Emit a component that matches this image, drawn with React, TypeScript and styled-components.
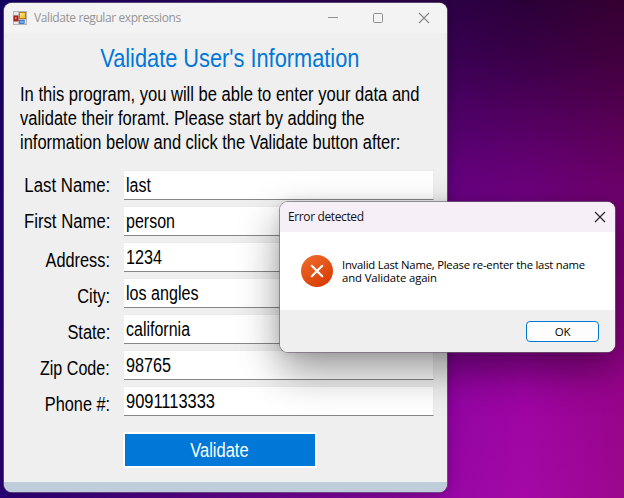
import React from "react";
import styled, { createGlobalStyle } from "styled-components";

const GlobalStyle = createGlobalStyle`
  *, *::before, *::after { box-sizing: border-box; }
  html, body { margin: 0; padding: 0; overflow: hidden; }
`;

const Desktop = styled.main`
  position: relative;
  width: 624px;
  height: 498px;
  overflow: hidden;
  font-family: "Liberation Sans", Arial, sans-serif;
  color: #000;
  background:
    linear-gradient(90deg, rgba(20, 0, 110, 0.85) 0%, rgba(40, 0, 120, 0.6) 30%, rgba(60, 0, 160, 0.13) 72%, rgba(60, 0, 160, 0) 84%, rgba(110, 0, 10, 0.16) 100%),
    linear-gradient(180deg, #2a0038 0%, #3a0048 12%, #560064 26%, #700080 40%, #8a0092 58%, #9e04a2 78%, #a408a6 100%);
`;

const MainWindow = styled.section`
  position: absolute;
  left: 4px;
  top: 3px;
  width: 443px;
  height: 489px;
  display: flex;
  flex-direction: column;
  border-radius: 8px;
  overflow: hidden;
  background: #efefef;
  box-shadow: 0 0 0 1px rgba(120, 110, 135, 0.6), 0 2px 14px rgba(0, 0, 0, 0.3);
`;

const TitleBar = styled.header`
  display: flex;
  align-items: center;
  flex: none;
  height: 30px;
  padding-left: 9px;
  background: #f3f3f3;
`;

const WindowTitle = styled.span<{ $color: string; $spacing: number }>`
  flex: 1;
  font: 12px/16px "Open Sans", "Noto Sans", sans-serif;
  letter-spacing: ${(p) => p.$spacing}px;
  color: ${(p) => p.$color};
  white-space: nowrap;
`;

const AppIcon = styled.svg`
  width: 14px;
  height: 14px;
  margin-right: 7px;
`;

const CaptionButtons = styled.div`
  display: flex;
`;

const CaptionButton = styled.button<{ $width?: number }>`
  display: grid;
  place-items: center;
  width: ${(p) => p.$width ?? 46}px;
  height: 30px;
  padding: 0;
  border: 0;
  background: none;
`;

const Narrow = styled.span<{ $scale?: number; $origin?: string }>`
  display: block;
  white-space: nowrap;
  transform: scaleX(${(p) => p.$scale ?? 0.825});
  transform-origin: ${(p) => p.$origin ?? "left"} center;
`;

const Content = styled.div`
  flex: 1;
  display: flex;
  flex-direction: column;
`;

const Heading = styled.h1`
  display: flex;
  justify-content: center;
  margin: 9px 0 0;
  padding-left: 9px;
  height: 32px;
  font-size: 26.7px;
  line-height: 32px;
  font-weight: 400;
  color: #0078d7;
`;

const Intro = styled.p`
  margin: 8px 0 0 16px;
  height: 72px;
  width: 410px;
  font-size: 20px;
  line-height: 24px;
`;

const Form = styled.form`
  display: grid;
  grid-template-columns: 106px 310px;
  column-gap: 14px;
  row-gap: 6px;
  margin-top: 16px;
`;

const Label = styled.label<{ $drop: number }>`
  display: flex;
  justify-content: flex-end;
  height: 30px;
  padding-top: ${(p) => p.$drop}px;
  font-size: 20px;
  line-height: 24px;
`;

const Field = styled.div`
  height: 30px;
  padding: 2px 0 0 2px;
  overflow: hidden;
  font-size: 20px;
  line-height: 24px;
  background: #fff;
  border: 1px solid #ebebeb;
  border-left: 0;
  border-bottom-color: #868686;
`;

const ValidateButton = styled.button`
  display: flex;
  justify-content: center;
  width: 194px;
  height: 36px;
  margin: 16px 0 0 119px;
  padding: 0 2px 0 0;
  border: 2px solid #fdfdfd;
  background: #0078d7;
  color: #fff;
  font: 20px/32px "Liberation Sans", Arial, sans-serif;
`;

const StatusStrip = styled.footer`
  height: 10px;
  background: #bfcddb;
`;

const Dialog = styled.section`
  position: absolute;
  left: 280px;
  top: 202px;
  width: 335px;
  height: 150px;
  display: flex;
  flex-direction: column;
  border-radius: 8px;
  overflow: hidden;
  background: #fff;
  box-shadow:
    0 0 0 1px rgba(110, 100, 115, 0.65),
    0 18px 42px rgba(0, 0, 0, 0.42),
    0 0 12px rgba(0, 0, 0, 0.1);
`;

const DialogTitle = styled.header`
  display: flex;
  align-items: center;
  height: 30px;
  flex: none;
  padding-left: 8px;
  background: #f7eff8;
`;

const DialogBody = styled.div`
  display: flex;
  height: 78px;
  padding: 23px 0 0 21px;
`;

const Message = styled.p`
  margin: 3px 0 0 9px;
  font: 11.3px/13px "Open Sans", "Noto Sans", sans-serif;
  white-space: nowrap;
`;

const MessageLine = styled.span<{ $spacing: number }>`
  display: block;
  letter-spacing: ${(p) => p.$spacing}px;
`;

const DialogFooter = styled.footer`
  flex: 1;
  display: flex;
  justify-content: flex-end;
  padding: 11px 16px 0 0;
  background: #efefef;
`;

const OkButton = styled.button`
  width: 73px;
  height: 21px;
  padding: 0;
  border: 1px solid #0078d4;
  border-radius: 4px;
  background: #fdfdfd;
  color: #000;
  font: 11.5px/19px "Open Sans", "Noto Sans", sans-serif;
  letter-spacing: -0.3px;
`;

const introLines = [
  { text: "In this program, you will be able to enter your data and", scale: 0.828 },
  { text: "validate their foramt. Please start by adding the", scale: 0.824 },
  { text: "information below and click the Validate button after:", scale: 0.823 },
];

const fields = [
  { label: "Last Name:", value: "last", drop: 3, labelScale: 0.84, scale: 0.8 },
  { label: "First Name:", value: "person", drop: 3, labelScale: 0.835, scale: 0.8 },
  { label: "Address:", value: "1234", drop: 6, labelScale: 0.815, scale: 0.81 },
  { label: "City:", value: "los angles", drop: 6, labelScale: 0.82, scale: 0.805 },
  { label: "State:", value: "california", drop: 6, labelScale: 0.82, scale: 0.8 },
  { label: "Zip Code:", value: "98765", drop: 6, labelScale: 0.805, scale: 0.81 },
  { label: "Phone #:", value: "9091113333", drop: 6, labelScale: 0.815, scale: 0.822 },
];

const CloseGlyph = ({ color }: { color: string }) => (
  <svg width="12" height="12" viewBox="0 0 12 12">
    <path d="M1 1L11 11M11 1L1 11" stroke={color} strokeWidth="1.1" fill="none" />
  </svg>
);

export default function App() {
  return (
    <Desktop>
      <GlobalStyle />
      <MainWindow>
        <TitleBar>
          <AppIcon viewBox="0 0 14 14">
            <defs>
              <linearGradient id="gold" x1="0" y1="0" x2="1" y2="1">
                <stop offset="0" stopColor="#fff0a0" />
                <stop offset="1" stopColor="#f0b000" />
              </linearGradient>
            </defs>
            <rect x="0.5" y="0.5" width="13" height="13" fill="#e9e9e9" stroke="#b5b5b5" />
            <path d="M1 4.5H6M5.5 1V13M6 8.5H13" stroke="#bdbdbd" fill="none" />
            <rect x="6.5" y="1.5" width="6" height="6" fill="url(#gold)" stroke="#b98110" />
            <rect x="1" y="5" width="4" height="5" fill="#c52b20" stroke="#8f1712" strokeWidth="0.8" />
            <rect x="2" y="6" width="1.5" height="2" fill="#f08070" />
            <rect x="6.4" y="9.4" width="4.8" height="3.2" fill="#70a8f8" stroke="#2f66c4" strokeWidth="0.8" />
          </AppIcon>
          <WindowTitle $color="#949494" $spacing={-0.4}>Validate regular expressions</WindowTitle>
          <CaptionButtons>
            <CaptionButton $width={44} aria-label="Minimize">
              <svg width="10" height="10" viewBox="0 0 10 10"><path d="M0 4.5H10" stroke="#8f8f8f" /></svg>
            </CaptionButton>
            <CaptionButton aria-label="Maximize">
              <svg width="10" height="10" viewBox="0 0 10 10"><rect x="0.5" y="0.5" width="9" height="9" rx="1" fill="none" stroke="#8f8f8f" /></svg>
            </CaptionButton>
            <CaptionButton aria-label="Close"><CloseGlyph color="#858585" /></CaptionButton>
          </CaptionButtons>
        </TitleBar>
        <Content>
          <Heading><Narrow $scale={0.816} $origin="center">Validate User's Information</Narrow></Heading>
          <Intro>
            {introLines.map((line) => <Narrow key={line.text} $scale={line.scale}>{line.text}</Narrow>)}
          </Intro>
          <Form>
            {fields.map((f) => (
              <React.Fragment key={f.label}>
                <Label $drop={f.drop}><Narrow $scale={f.labelScale} $origin="right">{f.label}</Narrow></Label>
                <Field><Narrow $scale={f.scale}>{f.value}</Narrow></Field>
              </React.Fragment>
            ))}
          </Form>
          <ValidateButton><Narrow $origin="center">Validate</Narrow></ValidateButton>
        </Content>
        <StatusStrip />
      </MainWindow>
      <Dialog role="dialog">
        <DialogTitle>
          <WindowTitle $color="#111" $spacing={-0.38}>Error detected</WindowTitle>
          <CaptionButton $width={30} aria-label="Close dialog"><CloseGlyph color="#222" /></CaptionButton>
        </DialogTitle>
        <DialogBody>
          <svg width="32" height="32" viewBox="0 0 32 32">
            <defs>
              <linearGradient id="err" x1="0.2" y1="0" x2="0.8" y2="1">
                <stop offset="0" stopColor="#f0682a" />
                <stop offset="1" stopColor="#d63a02" />
              </linearGradient>
            </defs>
            <circle cx="16" cy="16" r="16" fill="url(#err)" />
            <path d="M10.8 10.8L21.2 21.2M21.2 10.8L10.8 21.2" stroke="#fff" strokeWidth="2.2" strokeLinecap="round" />
          </svg>
          <Message>
            <MessageLine $spacing={-0.23}>Invalid Last Name, Please re-enter the last name</MessageLine>
            <MessageLine $spacing={-0.1}>and Validate again</MessageLine>
          </Message>
        </DialogBody>
        <DialogFooter><OkButton>OK</OkButton></DialogFooter>
      </Dialog>
    </Desktop>
  );
}
